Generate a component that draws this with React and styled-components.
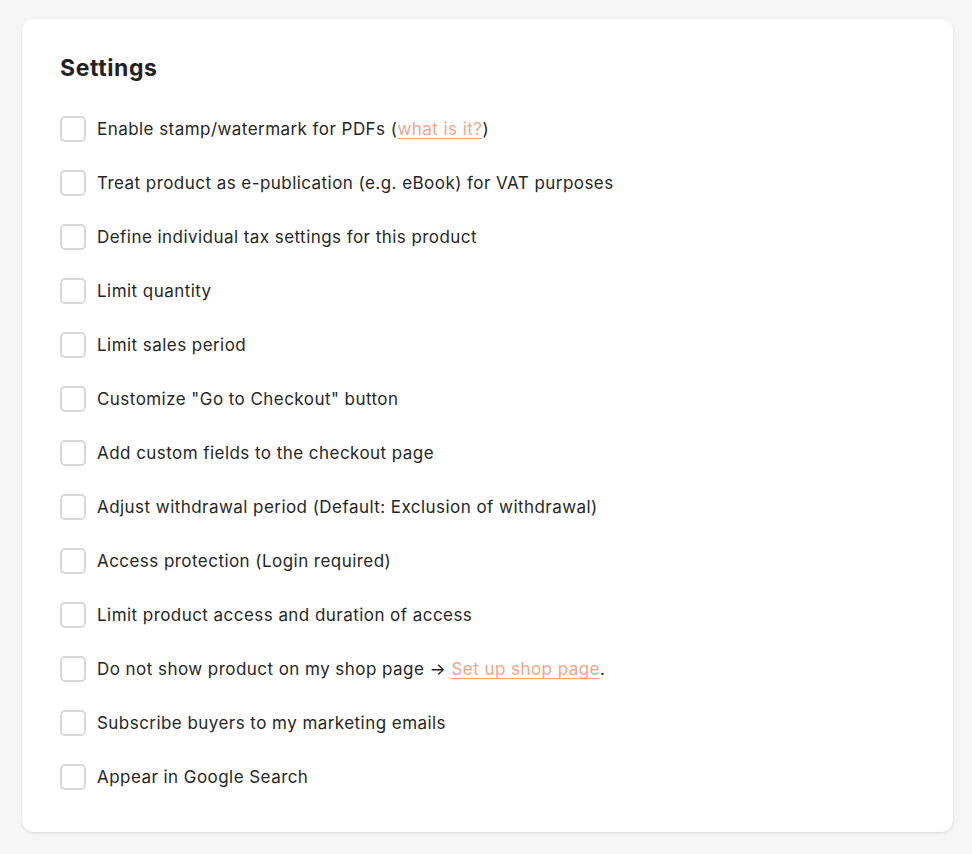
import React from "react";
import styled, { createGlobalStyle } from "styled-components";

const Global = createGlobalStyle`
  html, body { margin: 0; padding: 0; background: #f5f5f5; }
  body { font-family: Inter, "Noto Sans", sans-serif; color: #222; }
`;

const Card = styled.div`
  margin: 19px 19px 22px 22px;
  background: #fff;
  border-radius: 12px;
  box-shadow: 0 1px 3px rgba(0,0,0,0.12);
  padding: 33px 38px 42px 38px;
`;

const Title = styled.h2`
  margin: 0 0 32px 0;
  font-size: 23px;
  font-weight: 700;
  letter-spacing: 0.6px;
  color: #222;
  line-height: 32px;
`;

const List = styled.div`
  display: flex;
  flex-direction: column;
  gap: 28px;
`;

const Row = styled.label`
  display: flex;
  align-items: center;
  gap: 11px;
  font-size: 17px;
  line-height: 26px;
  letter-spacing: 0.45px;
  color: #262626;
  cursor: pointer;
`;

const Box = styled.span`
  width: 26px;
  height: 26px;
  box-sizing: border-box;
  border: 2px solid #d8d8d8;
  border-radius: 5px;
  background: #fff;
  flex: none;
`;

const Link = styled.a`
  color: #f0a48a;
  text-decoration: underline;
  text-underline-offset: 3px;
  text-decoration-thickness: 1px;
`;

const items = [
  <>Enable stamp/watermark for PDFs (<Link href="#">what is it?</Link>)</>,
  <>Treat product as e-publication (e.g. eBook) for VAT purposes</>,
  <>Define individual tax settings for this product</>,
  <>Limit quantity</>,
  <>Limit sales period</>,
  <>Customize "Go to Checkout" button</>,
  <>Add custom fields to the checkout page</>,
  <>Adjust withdrawal period (Default: Exclusion of withdrawal)</>,
  <>Access protection (Login required)</>,
  <>Limit product access and duration of access</>,
  <>Do not show product on my shop page → <Link href="#">Set up shop page</Link>.</>,
  <>Subscribe buyers to my marketing emails</>,
  <>Appear in Google Search</>,
];

export default function App() {
  return (
    <>
      <Global />
      <Card>
        <Title>Settings</Title>
        <List>
          {items.map((c, i) => (
            <Row key={i}>
              <Box />
              <span>{c}</span>
            </Row>
          ))}
        </List>
      </Card>
    </>
  );
}
